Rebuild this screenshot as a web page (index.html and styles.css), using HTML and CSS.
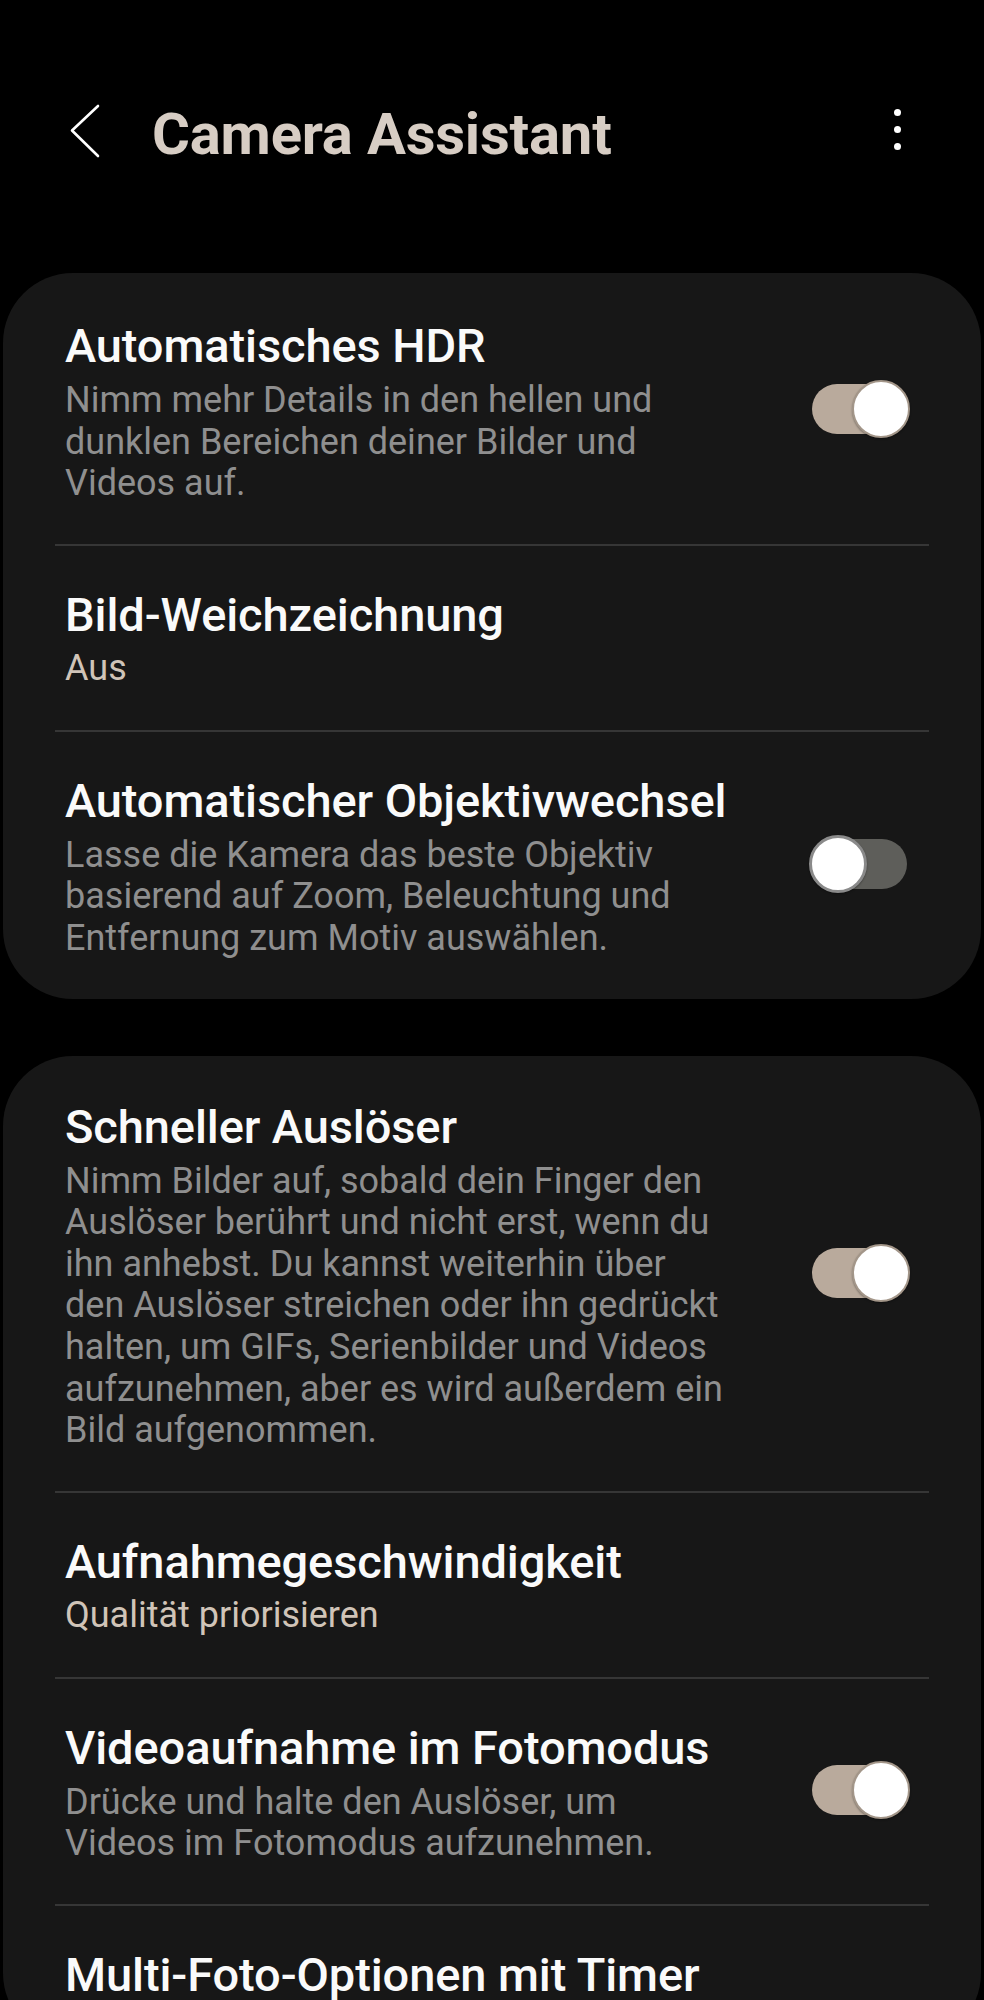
FILE: index.html
```html
<!DOCTYPE html>
<html lang="de">
<head>
<meta charset="utf-8">
<title>Camera Assistant</title>
<link rel="stylesheet" href="styles.css">
</head>
<body>
<div class="screen">
  <header class="appbar">
    <button class="back" aria-label="Zurück">
      <svg width="30" height="54" viewBox="0 0 30 54"><polyline points="28,2 2,26.5 28,52" fill="none" stroke="#ffffff" stroke-width="2.6" stroke-linecap="round" stroke-linejoin="round"/></svg>
    </button>
    <h1 class="appbar-title">Camera Assistant</h1>
    <div class="more" aria-label="Mehr"><span></span><span></span><span></span></div>
  </header>

  <section class="card">
    <div class="row">
      <div class="text">
        <div class="title">Automatisches HDR</div>
        <div class="desc">Nimm mehr Details in den hellen und<br>dunklen Bereichen deiner Bilder und<br>Videos auf.</div>
      </div>
      <div class="switch on"><span class="thumb"></span></div>
    </div>
    <div class="divider"></div>
    <div class="row">
      <div class="text">
        <div class="title">Bild-Weichzeichnung</div>
        <div class="summary">Aus</div>
      </div>
    </div>
    <div class="divider"></div>
    <div class="row">
      <div class="text">
        <div class="title">Automatischer Objektivwechsel</div>
        <div class="desc">Lasse die Kamera das beste Objektiv<br>basierend auf Zoom, Beleuchtung und<br>Entfernung zum Motiv auswählen.</div>
      </div>
      <div class="switch off"><span class="thumb"></span></div>
    </div>
  </section>

  <section class="card card-second">
    <div class="row">
      <div class="text">
        <div class="title">Schneller Auslöser</div>
        <div class="desc">Nimm Bilder auf, sobald dein Finger den<br>Auslöser berührt und nicht erst, wenn du<br>ihn anhebst. Du kannst weiterhin über<br>den Auslöser streichen oder ihn gedrückt<br>halten, um GIFs, Serienbilder und Videos<br>aufzunehmen, aber es wird außerdem ein<br>Bild aufgenommen.</div>
      </div>
      <div class="switch on"><span class="thumb"></span></div>
    </div>
    <div class="divider"></div>
    <div class="row">
      <div class="text">
        <div class="title">Aufnahmegeschwindigkeit</div>
        <div class="summary">Qualität priorisieren</div>
      </div>
    </div>
    <div class="divider"></div>
    <div class="row">
      <div class="text">
        <div class="title">Videoaufnahme im Fotomodus</div>
        <div class="desc">Drücke und halte den Auslöser, um<br>Videos im Fotomodus aufzunehmen.</div>
      </div>
      <div class="switch on"><span class="thumb"></span></div>
    </div>
    <div class="divider"></div>
    <div class="row">
      <div class="text">
        <div class="title">Multi-Foto-Optionen mit Timer</div>
      </div>
    </div>
  </section>
</div>
</body>
</html>
```

FILE: styles.css
```css
* { box-sizing: border-box; }

html, body {
  margin: 0;
  padding: 0;
  background: #000000;
}

body {
  font-family: Roboto, "Noto Sans", "Liberation Sans", sans-serif;
  color: #fafafa;
}

.screen {
  width: 984px;
  padding-bottom: 40px;
}

/* ---------- App bar ---------- */
.appbar {
  display: flex;
  align-items: flex-start;
  height: 169px;
  padding: 99px 83px 0 70px;
}

.back {
  border: 0;
  padding: 0;
  margin: 5px 0 0 0;
  background: none;
  width: 30px;
  height: 54px;
  display: block;
}

.back svg { display: block; }

.appbar-title {
  margin: 0 0 0 52px;
  font-size: 58px;
  line-height: 70px;
  font-weight: 700;
  color: #d7cdc4;
  letter-spacing: -0.2px;
}

.more {
  margin-left: auto;
  margin-top: 10px;
  width: 8px;
  display: flex;
  flex-direction: column;
  align-items: center;
  gap: 10px;
}

.more span {
  width: 7px;
  height: 7px;
  border-radius: 50%;
  background: #ffffff;
}

/* ---------- Cards ---------- */
.card {
  margin: 104px 3px 0;
  padding: 4px 0 0;
  background: #171717;
  border-radius: 70px;
}

.card-second {
  margin-top: 57px;
  padding-top: 2px;
}

.row {
  display: flex;
  align-items: center;
  padding: 42px 71px 41px 62px;
}

.text {
  flex: 1;
  min-width: 0;
}

.title {
  font-size: 47px;
  line-height: 54px;
  font-weight: 500;
  color: #fafafa;
  letter-spacing: -0.1px;
}

.desc {
  margin-top: 7px;
  margin-bottom: -2px;
  font-size: 36px;
  line-height: 41.6px;
  font-weight: 400;
  color: #8f8f8f;
}

.summary {
  margin-top: 5px;
  font-size: 36px;
  line-height: 42px;
  font-weight: 400;
  color: #d0c4b8;
}

.divider {
  height: 2px;
  margin: 0 52px;
  background: #363636;
}

/* ---------- Switch ---------- */
.switch {
  position: relative;
  flex: none;
  width: 101px;
  height: 60px;
  margin-left: 30px;
  margin-bottom: 4px;
}

.switch::before {
  content: "";
  position: absolute;
  left: 3px;
  right: 3px;
  top: 5px;
  bottom: 5px;
  border-radius: 25px;
}

.switch.on::before { background: #b9aa9c; }
.switch.off::before { background: #5e5e5a; }

.thumb {
  position: absolute;
  top: 1px;
  width: 58px;
  height: 58px;
  border-radius: 50%;
  background: #ffffff;
  box-shadow: 0 1px 2px rgba(0, 0, 0, 0.35);
}

.switch.on .thumb {
  right: 0;
  border: 2.5px solid #a39689;
}

.switch.off .thumb {
  left: 0;
  border: 3px solid #8a8a8a;
}
```
